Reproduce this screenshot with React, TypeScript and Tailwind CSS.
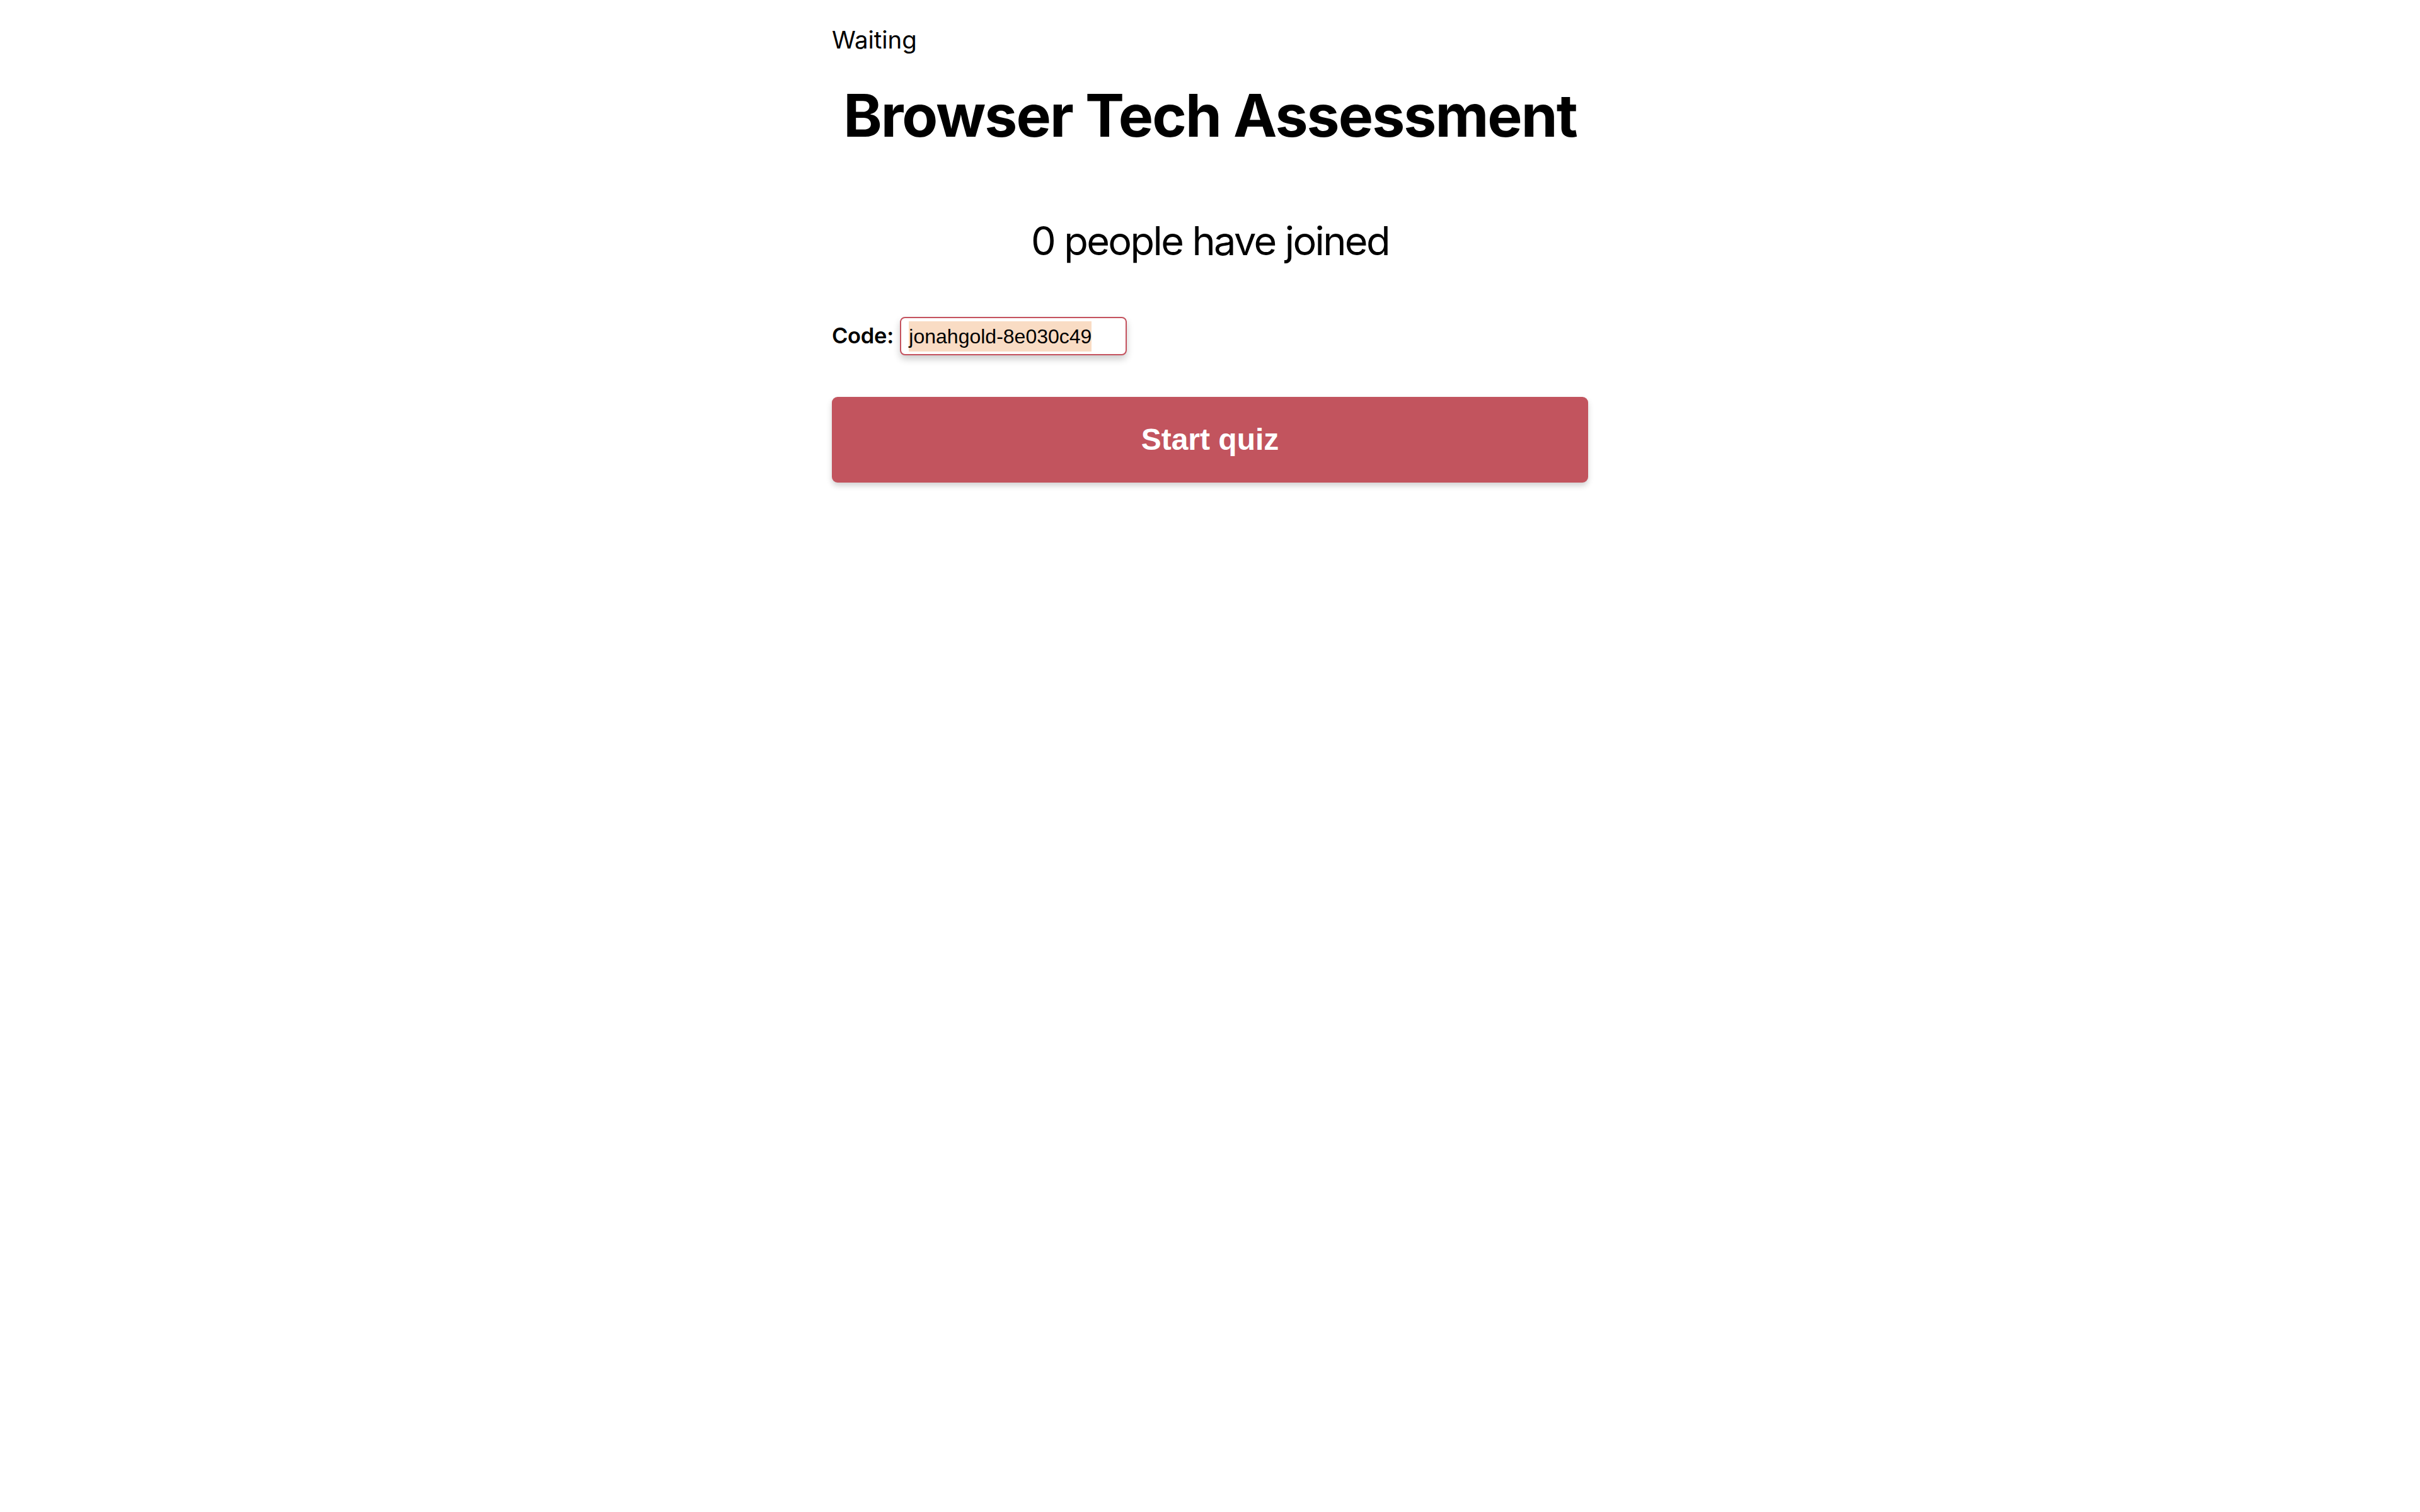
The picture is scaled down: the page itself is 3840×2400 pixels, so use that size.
import React from "react";

export default function App() {
  return (
    <div className="min-h-screen w-full bg-white text-black">
      <div className="mx-auto w-[1200px] pt-[40px]">
        <p className="font-['Inter',sans-serif] text-[38.4px] leading-[46px]">Waiting</p>
        <h1 className="mt-[41px] text-center font-['Inter',sans-serif] text-[93px] font-bold leading-[112px] tracking-[-1.95px]">
          Browser Tech Assessment
        </h1>
        <p className="mt-[105px] text-center font-['Inter',sans-serif] text-[63px] leading-[76px] tracking-[-2.6px]">
          0 people have joined
        </p>
        <div className="mt-[83px] flex items-baseline gap-[10px]">
          <span className="font-['Inter',sans-serif] text-[34.5px] font-semibold tracking-[-0.3px]">Code:</span>
          <div className="flex h-[61px] w-[360px] items-center rounded-[8px] border-[2.5px] border-[#c4525e] bg-white px-[12.5px] shadow-[0_6px_12px_rgba(0,0,0,0.2)]">
            <span className="bg-[#f9dcc4] font-['Liberation_Sans',Arial,sans-serif] text-[32px] leading-normal">
              jonahgold-8e030c49
            </span>
          </div>
        </div>
        <button className="mt-[66px] flex h-[136px] w-[1200px] items-center justify-center rounded-[9px] bg-[#c2545e] font-['Liberation_Sans',Arial,sans-serif] text-[48px] font-bold text-white shadow-[0_5px_10px_rgba(0,0,0,0.18)]">
          Start quiz
        </button>
      </div>
    </div>
  );
}
